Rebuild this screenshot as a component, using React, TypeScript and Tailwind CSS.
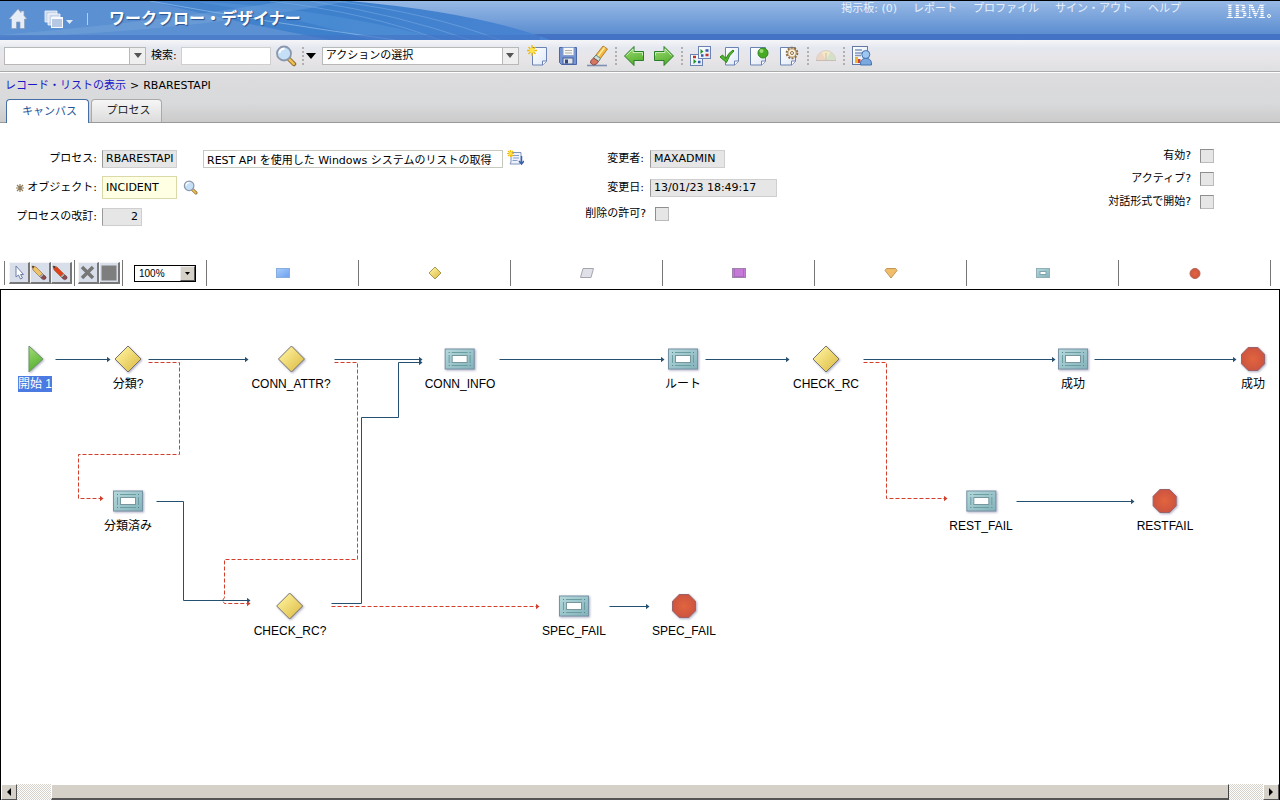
import type { ReactNode } from "react";

const uiFont = "font-['DejaVu_Sans','Noto_Sans_CJK_JP',sans-serif]";
const canvasFont = "font-['Liberation_Sans','Noto_Sans_CJK_JP',sans-serif]";

type NodeKind = "start" | "condition" | "action" | "stop";

// Canvas nodes: x is the centre, y the top of the icon
const nodes: { id: string; kind: NodeKind; x: number; y: number; label: string; selected?: boolean }[] = [
  { id: "start", kind: "start", x: 34, y: 53, label: "開始 1", selected: true },
  { id: "classify", kind: "condition", x: 127, y: 53, label: "分類?" },
  { id: "connAttr", kind: "condition", x: 290, y: 53, label: "CONN_ATTR?" },
  { id: "connInfo", kind: "action", x: 459, y: 53, label: "CONN_INFO" },
  { id: "route", kind: "action", x: 682, y: 53, label: "ルート" },
  { id: "checkRc", kind: "condition", x: 825, y: 53, label: "CHECK_RC" },
  { id: "success", kind: "action", x: 1072, y: 53, label: "成功" },
  { id: "successEnd", kind: "stop", x: 1252, y: 53, label: "成功" },
  { id: "classified", kind: "action", x: 127, y: 195, label: "分類済み" },
  { id: "checkRc2", kind: "condition", x: 289, y: 300, label: "CHECK_RC?" },
  { id: "specFail", kind: "action", x: 573, y: 300, label: "SPEC_FAIL" },
  { id: "specFailEnd", kind: "stop", x: 683, y: 300, label: "SPEC_FAIL" },
  { id: "restFail", kind: "action", x: 980, y: 195, label: "REST_FAIL" },
  { id: "restFailEnd", kind: "stop", x: 1164, y: 195, label: "RESTFAIL" },
];

const positiveEdges = [
  "M54 69H108",
  "M147 69H246",
  "M333 69H420",
  "M155 211H182V310H248",
  "M330 313H360V127H397V72H420",
  "M498 69H662",
  "M704 69H787",
  "M862 69H1053",
  "M1093 69H1234",
  "M608 316H647",
  "M1015 211H1132",
];

const negativeEdges = [
  "M147 72H178V164H77V208H101",
  "M333 72H356V269H223V307L221 310L223 313H248",
  "M862 72H885V208H945",
  "M330 316H537",
];

const topLinks = ["レポート", "プロファイル", "サイン・アウト", "ヘルプ"];

function NodeIcon({ kind }: { kind: NodeKind }) {
  return (
    <svg width="34" height="32" viewBox="0 0 34 32" className="block drop-shadow-[1px_1px_1px_rgba(90,90,140,0.5)]" aria-hidden="true">
      {kind === "start" && <path d="M11 3L25 16L11 29Z" fill="url(#green)" stroke="#6f9468" />}
      {kind === "condition" && <path d="M17 3L30 16L17 29L4 16Z" fill="url(#yellow)" stroke="#77746e" />}
      {kind === "action" && (
        <g>
          <rect x="2.500" y="6" width="29" height="20" fill="url(#teal)" stroke="#7692a4" />
          <path d="M9 9.500h16M9 22.500h16M6.500 12v8M27.500 12v8" stroke="#6c9da1" />
          <path d="M6 9.500h1M27 9.500h1M6 22.500h1M27 22.500h1" stroke="#4b868d" />
          <rect x="9.500" y="12.500" width="15" height="7" fill="#fff" stroke="#76979d" />
        </g>
      )}
      {kind === "stop" && (
        <path d="M12.200 4.500h9.600l6.700 6.700v9.600l-6.700 6.700h-9.600l-6.700-6.700v-9.600Z" fill="url(#red)" stroke="#98646a" />
      )}
    </svg>
  );
}

function Defs() {
  return (
    <svg width="0" height="0" className="absolute" aria-hidden="true">
      <defs>
        <linearGradient id="green" x1="0" y1="0" x2="0.3" y2="1">
          <stop offset="0" stopColor="#a3dc78" />
          <stop offset="1" stopColor="#55b02f" />
        </linearGradient>
        <linearGradient id="yellow" x1="0" y1="0" x2="1" y2="1">
          <stop offset="0.2" stopColor="#fbec93" />
          <stop offset="1" stopColor="#d9b73e" />
        </linearGradient>
        <linearGradient id="teal" x1="0" y1="0" x2="1" y2="1">
          <stop offset="0" stopColor="#b5d9dc" />
          <stop offset="1" stopColor="#83b2ba" />
        </linearGradient>
        <radialGradient id="red">
          <stop offset="0" stopColor="#e2653e" />
          <stop offset="1" stopColor="#cd5440" />
        </radialGradient>
        <linearGradient id="blue" x1="0" y1="0" x2="1" y2="1">
          <stop offset="0" stopColor="#a6cdfa" />
          <stop offset="1" stopColor="#6d9ff0" />
        </linearGradient>
        <linearGradient id="page" x1="0" y1="0" x2="1" y2="1">
          <stop offset="0" stopColor="#ffffff" />
          <stop offset="1" stopColor="#dfe8f7" />
        </linearGradient>
        <marker id="arrowBlue" viewBox="0 0 4 6" markerWidth="4" markerHeight="6" refX="3" refY="3" markerUnits="userSpaceOnUse">
          <path d="M0 0L4 3L0 6Z" fill="#26506f" />
        </marker>
        <marker id="arrowRed" viewBox="0 0 4 6" markerWidth="4" markerHeight="6" refX="3" refY="3" markerUnits="userSpaceOnUse">
          <path d="M0 0L4 3L0 6Z" fill="#d2402c" />
        </marker>
      </defs>
    </svg>
  );
}

function Glass({ size }: { size: number }) {
  return (
    <svg width={size} height={size} viewBox="0 0 22 22" aria-hidden="true">
      <path d="M14 14l5 5" stroke="#8a6b33" strokeWidth="4.500" strokeLinecap="round" />
      <path d="M14.500 14.500l4.300 4.300" stroke="#eebf52" strokeWidth="2.600" strokeLinecap="round" />
      <circle cx="9" cy="8.500" r="7" fill="#c5dff6" stroke="#8b97ad" strokeWidth="1.800" />
      <path d="M4.500 8a4.500 4.500 0 0 1 5-4.200" stroke="#fff" strokeWidth="2" fill="none" />
    </svg>
  );
}

function Icon({ children }: { children: ReactNode }) {
  return (
    <svg width="22" height="22" viewBox="0 0 22 22" fill="none" aria-hidden="true">
      {children}
    </svg>
  );
}

const newIcon = (
  <Icon>
    <path d="M5.500 2.500h14v14l-4 3.500h-10Z" fill="url(#page)" stroke="#6b83b3" />
    <path d="M15.500 20v-4h4" fill="#fff" stroke="#6b83b3" />
    <path d="M5 0v11M0 5.500h10M1.500 2l7 7M8.500 2l-7 7" stroke="#edb90c" strokeWidth="1.300" />
    <circle cx="5" cy="5.500" r="2.400" fill="#ffe54a" />
  </Icon>
);

const saveIcon = (
  <Icon>
    <path d="M2.500 2.500h17v17h-15l-2-2Z" fill="#7695d3" stroke="#4a67a8" />
    <rect x="6" y="2.500" width="11" height="8" fill="#f7f7f5" stroke="#8aa1ce" />
    <path d="M8 5.500h7M8 8h7" stroke="#b1b1a8" />
    <rect x="6" y="13" width="10" height="6" fill="#e2e3e8" stroke="#47629b" />
    <rect x="8" y="14.500" width="3" height="4" fill="#334a80" />
  </Icon>
);

const clearIcon = (
  <Icon>
    <path d="M0 20.500h20" stroke="#8190b2" strokeWidth="1.600" />
    <path d="M16 1l4.500 3-9 12-4.500-3.500Z" fill="#f1b83f" stroke="#b58030" />
    <path d="M17.500 2.500l-9 12" stroke="#ffe9a3" strokeWidth="1.500" />
    <path d="M9 10l4.500 3.500-2 3-5-3.500Z" fill="#c7dedb" stroke="#668681" />
    <path d="M6.500 13l5 3.500-2 2.500-3 1-3-2 .500-2.500Z" fill="#d67762" stroke="#8b4a41" />
  </Icon>
);

const prevIcon = (
  <Icon>
    <path d="M1.500 11L11 1.500v5h9.500v9H11v5Z" fill="url(#green)" stroke="#2a7d2b" />
    <path d="M3.500 10.500L10 4v3.500h9.500v3" stroke="#c4edb4" />
  </Icon>
);

const nextIcon = (
  <Icon>
    <path d="M20.500 11L11 1.500v5H1.500v9H11v5Z" fill="url(#green)" stroke="#2a7d2b" />
    <path d="M2.500 10.500v-3H12V4l6.500 6.500" stroke="#c4edb4" />
  </Icon>
);

const routeIcon = (
  <Icon>
    <rect x="1.500" y="9.500" width="12" height="11" fill="url(#page)" stroke="#6b83b3" />
    <rect x="9.500" y="1.500" width="12" height="12" fill="url(#page)" stroke="#6b83b3" />
    <path d="M11.500 4v5l3-2.500ZM4.500 14v5l3-2.500Z" fill="#1d9320" />
    <path d="M16.500 5.500h3M9 17h2.500" stroke="#3358aa" strokeWidth="2.500" />
    <path d="M4 12h3M16.500 10h3" stroke="#c2312b" strokeWidth="2.500" />
    <path d="M12 10.500h2.500" stroke="#3358aa" strokeWidth="2.500" />
  </Icon>
);

const validateIcon = (
  <Icon>
    <path d="M6.500 2.500h13v14l-4 3.500h-9Z" fill="url(#page)" stroke="#6b83b3" />
    <path d="M15.500 20v-4h4" fill="#fff" stroke="#6b83b3" />
    <path d="M1 12l2.500-2 3.500 3.500Q9 8 14 5l1 1Q10 10 7.500 17.500Z" fill="#52b52f" stroke="#2f861b" />
  </Icon>
);

const activateIcon = (
  <Icon>
    <path d="M1.500 2.500h15v14l-4 3.500h-11Z" fill="url(#page)" stroke="#6b83b3" />
    <path d="M12.500 20v-4h4" fill="#fff" stroke="#6b83b3" />
    <circle cx="14" cy="8" r="5" fill="#46aa24" stroke="#2f861b" />
    <circle cx="12.500" cy="6" r="2" fill="#98dc73" />
  </Icon>
);

const revisionIcon = (
  <Icon>
    <path d="M1.500 2.500h15v14l-4 3.500h-11Z" fill="url(#page)" stroke="#6b83b3" />
    <path d="M12.500 20v-4h4" fill="#fff" stroke="#6b83b3" />
    <circle cx="13" cy="8" r="5.300" stroke="#8e6e43" strokeWidth="2" strokeDasharray="2 1.300" />
    <circle cx="13" cy="8" r="4.200" fill="#fbf0dc" stroke="#a98653" />
    <circle cx="13" cy="8" r="1.500" fill="#fff" stroke="#8e6e43" />
  </Icon>
);

const gaugeIcon = (
  <Icon>
    <path d="M1.500 15.500a9.500 9.500 0 0 1 9.500-9.500v9.500Z" fill="#eed4c3" />
    <path d="M20.500 15.500a9.500 9.500 0 0 0-9.500-9.500v9.500Z" fill="#d3e1c8" />
    <path d="M6.500 7a9.500 9.500 0 0 1 9 0L11 15.500Z" fill="#f2e8c4" />
    <path d="M1 15.500h20M11 8v8" stroke="#c7bcb6" />
    <path d="M1.500 15a9.500 9.500 0 0 1 19 0" stroke="#d8cfc8" />
  </Icon>
);

const reportIcon = (
  <Icon>
    <rect x="1.500" y="1.500" width="15" height="18" fill="url(#page)" stroke="#6378a5" />
    <path d="M4 5h7M4 8h9M4 10.500h6" stroke="#8195bb" strokeWidth="1.400" />
    <rect x="4" y="12" width="3" height="6" fill="#eab432" />
    <rect x="7" y="14" width="2.500" height="4" fill="#cc4138" />
    <path d="M9.500 20q-.500-5 3.500-6.500h4q4 1.500 3.500 6.500Z" fill="#79a9df" stroke="#4473af" />
    <circle cx="14.800" cy="9.500" r="4" fill="#9fc6f0" stroke="#4473af" />
  </Icon>
);

function ToolButton({ label, children }: { label: string; children: ReactNode }) {
  return (
    <button type="button" aria-label={label} className="flex h-6 w-[30px] items-center justify-center">
      {children}
    </button>
  );
}

function Dots() {
  return <span className="h-[20px] w-[6px] shrink-0 bg-[radial-gradient(circle,#b0b0b0_1px,transparent_1px)] bg-[length:6px_4px]" />;
}

function DropArrow() {
  return (
    <span className="pointer-events-none flex w-4 shrink-0 items-center justify-center border-l border-[#b8b8b8] bg-[#efeff0]">
      <svg width="8" height="5" viewBox="0 0 8 5" aria-hidden="true">
        <path d="M0 0h8L4 5Z" fill="#555" />
      </svg>
    </span>
  );
}

function Header() {
  return (
    <header className="relative flex h-10 items-start justify-between border-t border-black bg-[linear-gradient(#97b9e5,#5c8ed1_33px,#4473c5_33px)] text-white">
      <svg className="absolute inset-y-0 left-0 h-full" width="620" height="39" viewBox="0 0 620 39" preserveAspectRatio="none" aria-hidden="true">
        <defs>
          <linearGradient id="swoosh">
            <stop offset="0" stopColor="#5088cc" />
            <stop offset="0.6" stopColor="#3d80cc" />
            <stop offset="1" stopColor="#4a84d2" />
          </linearGradient>
        </defs>
        <path d="M0 0H350Q480 12 550 39H0Z" fill="url(#swoosh)" />
        <path d="M0 0H150Q230 20 330 39H0Z" fill="#5b90d2" />
        <path d="M0 34Q150 22 285 0H350Q180 32 0 36Z" fill="#82aee0" opacity="0.35" />
        <path d="M190 0Q320 6 445 39H370Q290 14 190 0Z" fill="#5f9ddd" opacity="0.35" />
        <path d="M150 0Q260 20 395 39" stroke="#9cc4ee" fill="none" opacity="0.6" />
        <path d="M270 0Q370 12 440 39M310 0Q400 14 470 39M335 0Q430 12 500 39" stroke="#74a9e3" fill="none" opacity="0.6" />
        <path d="M0 34H540V39H0Z" fill="#4473c5" opacity="0.6" />
      </svg>

      <div className="relative flex h-9 items-center pl-2">
        <a href="#home" aria-label="ホーム">
          <svg width="20" height="22" viewBox="0 0 20 22" aria-hidden="true">
            <path d="M10 1L1 11h2.500v9.500h5V14h3.500v6.500h4.500V11H19l-3-3.500V3h-3v1.500Z" fill="#e7edf6" stroke="#8c9fba" strokeWidth="0.700" />
          </svg>
        </a>
        <button type="button" aria-label="ジャンプ先" className="ml-4 flex items-end gap-0.5">
          <svg width="20" height="20" viewBox="0 0 20 20" aria-hidden="true">
            <path d="M1 2h12v3H5v8H1ZM4 5h12v3H8v8H4Z" fill="#c6d5ea" stroke="#f6f9fd" strokeWidth="0.800" />
            <rect x="7.500" y="8.500" width="11" height="10" fill="#b7c9e2" stroke="#f6f9fd" />
            <path d="M7.500 9.500h11" stroke="#f6f9fd" />
          </svg>
          <svg width="8" height="11" viewBox="0 0 8 11" aria-hidden="true">
            <path d="M0 2h7L3.500 6Z" fill="#dfe8f5" />
          </svg>
        </button>
        <span className="ml-[13px] h-3 w-px bg-[#b7cdec]" />
        <h1 className="ml-[21px] text-base leading-5 font-bold [text-shadow:1px_1px_1px_#2c4f8a]">ワークフロー・デザイナー</h1>
      </div>

      <div className="relative flex items-start pr-2">
        <nav className="flex gap-4 text-[11px] leading-4 text-[#e8f0fb]">
          <a href="#bulletins">掲示板: (0)</a>
          {topLinks.map((link) => (
            <a key={link} href={`#${link}`}>{link}</a>
          ))}
        </nav>
        <span className="ml-[45px] bg-[repeating-linear-gradient(#fff_0_1px,rgba(255,255,255,0.3)_1px_2px)] bg-clip-text font-['Liberation_Serif',serif] text-[20px] leading-5 font-bold text-transparent">IBM</span>
        <svg width="6" height="20" viewBox="0 0 6 20" aria-hidden="true">
          <circle cx="3" cy="15" r="1.500" fill="none" stroke="#fff" />
        </svg>
      </div>
    </header>
  );
}

function Toolbar() {
  return (
    <div className="flex h-8 items-center border-b border-[#a9aaa9] bg-[linear-gradient(#f6f6f8,#e5e8f0_25%,#e8e5e7_60%,#dee0e1)] pl-1">
      <div className="flex h-[18px] w-[142px] border border-[#b8b8b8] bg-white">
        <select aria-label="検索条件" className="min-w-0 flex-1 appearance-none px-0.5 outline-none">
          <option></option>
        </select>
        <DropArrow />
      </div>
      <label htmlFor="find" className="ml-[5px]">検索:</label>
      <input id="find" type="text" className="ml-1 h-[18px] w-[90px] border border-[#cfcfcf] bg-white px-1 outline-none" />
      <button type="button" aria-label="検索" className="ml-1 flex">
        <Glass size={22} />
      </button>
      <span className="ml-[3px] flex"><Dots /></span>
      <button type="button" aria-label="検索オプション" className="mr-[6px]">
        <svg width="10" height="6" viewBox="0 0 10 6" aria-hidden="true"><path d="M0 0h10L5 6Z" /></svg>
      </button>
      <div className="flex h-[18px] w-[197px] border border-[#b8b8b8] bg-white">
        <select aria-label="アクション" className="min-w-0 flex-1 appearance-none px-[3px] leading-4 outline-none">
          <option>アクションの選択</option>
        </select>
        <DropArrow />
      </div>
      <div className="ml-1 flex items-center">
        <ToolButton label="新規">{newIcon}</ToolButton>
        <ToolButton label="保存">{saveIcon}</ToolButton>
        <ToolButton label="クリア">{clearIcon}</ToolButton>
        <Dots />
        <ToolButton label="前へ">{prevIcon}</ToolButton>
        <ToolButton label="次へ">{nextIcon}</ToolButton>
        <Dots />
        <ToolButton label="ルート">{routeIcon}</ToolButton>
        <ToolButton label="検証">{validateIcon}</ToolButton>
        <ToolButton label="有効化">{activateIcon}</ToolButton>
        <ToolButton label="改訂">{revisionIcon}</ToolButton>
        <Dots />
        <ToolButton label="メトリック">{gaugeIcon}</ToolButton>
        <Dots />
        <ToolButton label="レポートの実行">{reportIcon}</ToolButton>
      </div>
    </div>
  );
}

function Tabs() {
  return (
    <div className="h-[51px] border-t border-b border-t-white border-b-[#999] bg-[linear-gradient(#dddbde,#d8dadb_60%,#cccbcc)]">
      <div className="flex h-[26px] items-center gap-1 pl-[5px]">
        <a href="#list" className="text-[#1717c8]">レコード・リストの表示</a>
        <span>&gt;</span>
        <span>RBARESTAPI</span>
      </div>
      <div role="tablist" className="flex gap-0.5 pl-[6px]">
        <button role="tab" type="button" aria-selected="true" className="h-6 w-[83px] rounded-t border border-b-0 border-[#466da6] bg-white pl-1 text-[#23539b]">キャンバス</button>
        <button role="tab" type="button" aria-selected="false" className="h-[23px] w-[71px] rounded-t border border-b-0 border-[#aaa] bg-[linear-gradient(#f6f6f6,#dcdcdc)] pl-1 text-[#222]">プロセス</button>
      </div>
    </div>
  );
}

const readOnly = "h-[18px] border border-[#cfcfcf] border-l-[#999] bg-[#e6e6e6] pl-[3px] leading-4 outline-none";
const checkbox = "h-[14px] w-[14px] appearance-none border border-[#bbb] border-t-[#8e8e8e] border-l-[#8e8e8e] bg-[#e6e6e6]";

function ProcessForm() {
  return (
    <form className="grid h-[137px] grid-cols-[45%_40%_15%] pt-[21px]">
      <div>
        <div className="flex h-[29px] items-center">
          <label htmlFor="process" className="w-[97px] text-right">プロセス:</label>
          <input id="process" readOnly defaultValue="RBARESTAPI" className={`${readOnly} ml-[5px] w-[75px]`} />
          <input aria-label="説明" defaultValue="REST API を使用した Windows システムのリストの取得" className="ml-[26px] h-[18px] w-[300px] border border-[#c5c9c0] px-[3px] leading-4 outline-none" />
          <button type="button" aria-label="詳細説明" className="ml-1">
            <svg width="17" height="17" viewBox="0 0 17 17" fill="none" aria-hidden="true">
              <path d="M4 2.500h10v9l-1 2.500H3l1-2Z" fill="#eef3fb" stroke="#8196bd" />
              <path d="M6 5.500h6M6 8h6M5.500 10.500h5" stroke="#88a0cc" />
              <path d="M14.500 6v7M12 11l2.500 3 2.500-3" stroke="#3c5fae" strokeWidth="1.500" />
              <path d="M3.500 0v7M0 3.500h7M1 1l5 5M6 1l-5 5" stroke="#f0bd13" strokeWidth="1.200" />
              <circle cx="3.500" cy="3.500" r="1.500" fill="#ffe54a" />
            </svg>
          </button>
        </div>
        <div className="flex h-[29px] items-center">
          <label htmlFor="object" className="flex w-[97px] items-center justify-end gap-[3px]">
            <svg width="8" height="8" viewBox="0 0 8 8" aria-hidden="true">
              <path d="M4 0v8M0 4h8M1 1l6 6M7 1l-6 6" stroke="#8f7c5c" strokeWidth="1.200" />
            </svg>
            オブジェクト:
          </label>
          <input id="object" defaultValue="INCIDENT" className="ml-[5px] h-[23px] w-[75px] border border-[#dcd9a8] bg-[#ffffe4] pl-[3px] outline-none" />
          <button type="button" aria-label="値の選択" className="ml-1.5 flex"><Glass size={15} /></button>
        </div>
        <div className="flex h-[29px] items-center">
          <label htmlFor="revision" className="w-[97px] text-right">プロセスの改訂:</label>
          <input id="revision" readOnly defaultValue="2" className={`${readOnly} ml-[5px] w-10 pr-[3px] text-right`} />
        </div>
      </div>

      <div>
        <div className="flex h-[29px] items-center">
          <label htmlFor="changedBy" className="w-[68px] text-right">変更者:</label>
          <input id="changedBy" readOnly defaultValue="MAXADMIN" className={`${readOnly} ml-1.5 w-[75px]`} />
        </div>
        <div className="flex h-[29px] items-center">
          <label htmlFor="changedDate" className="w-[68px] text-right">変更日:</label>
          <input id="changedDate" readOnly defaultValue="13/01/23 18:49:17" className={`${readOnly} ml-1.5 w-[127px]`} />
        </div>
        <div className="flex h-[23px] items-center">
          <label htmlFor="allowDelete" className="w-[70px] text-right">削除の許可?</label>
          <input id="allowDelete" type="checkbox" className={`${checkbox} ml-[9px]`} />
        </div>
      </div>

      <div className="pr-[66px] whitespace-nowrap">
        {[["enabled", "有効?"], ["active", "アクティブ?"], ["interactive", "対話形式で開始?"]].map(([id, text]) => (
          <div key={id} className="flex h-[23px] items-center justify-end gap-[9px]">
            <label htmlFor={id}>{text}</label>
            <input id={id} type="checkbox" className={checkbox} />
          </div>
        ))}
      </div>
    </form>
  );
}

function ModeButton({ label, children }: { label: string; children: ReactNode }) {
  return (
    <button type="button" aria-label={label} className="flex h-[22px] w-[21px] items-center justify-center border border-[#f5f5f5] border-r-2 border-b-2 border-r-[#777] border-b-[#777] bg-[#d8dfea]">
      <svg width="18" height="18" viewBox="0 0 18 18" className="shrink-0" aria-hidden="true">{children}</svg>
    </button>
  );
}

function Pencil({ color }: { color: string }) {
  return (
    <g>
      <path d="M1 2l4 1 8 8-3 3-8-8Z" fill={color} stroke="#9c7245" strokeWidth="0.700" />
      <path d="M1 2l2.500.600L2 4.500Z" fill="#333" />
      <path d="M11.500 9.500l-3 3 1.500 1.500 3-3Z" fill="#aaa" stroke="#777" strokeWidth="0.500" />
      <path d="M13 11l-3 3q2.500 3 4.500 1t-1.500-4Z" fill="#8d4850" stroke="#62343c" strokeWidth="0.500" />
    </g>
  );
}

const palette: { label: string; shape: ReactNode }[] = [
  { label: "タスク", shape: <rect x="1.500" y="2.500" width="13" height="9" fill="url(#blue)" stroke="#88aede" /> },
  { label: "条件", shape: <path d="M8 1l6 6-6 6-6-6Z" fill="url(#yellow)" stroke="#a99754" /> },
  { label: "サブプロセス", shape: <path d="M4 2.500h10.500l-2.500 9H1.500Z" fill="#dfe0e8" stroke="#a5a5af" /> },
  {
    label: "手動入力",
    shape: (
      <g>
        <rect x="1.500" y="2.500" width="13" height="9" fill="#c47ad6" stroke="#9d84a8" />
        <path d="M3.500 3v8M12.500 3v8M4 10.500h8" stroke="#ad68c5" />
      </g>
    ),
  },
  { label: "待機", shape: <path d="M3.500 2.500h9l1.500 2-6 7.500-6-7.500Z" fill="#f1bd68" stroke="#c1965b" /> },
  {
    label: "対話",
    shape: (
      <g>
        <rect x="1.500" y="2.500" width="13" height="9" fill="url(#teal)" stroke="#91b0b8" />
        <rect x="5" y="5.500" width="6" height="3" fill="#fff" stroke="#7fa4ae" />
      </g>
    ),
  },
  { label: "停止", shape: <circle cx="8" cy="7.500" r="5" fill="url(#red)" stroke="#b56353" /> },
];

function Palette() {
  return (
    <div className="flex h-[29px] pb-[3px]">
      <div className="flex w-[206px] shrink-0 items-center pl-1">
        <span className="h-6 w-px bg-[#777]" />
        <div className="ml-1 flex">
          <ModeButton label="選択">
            <path d="M6 2v11l2.500-2 2 4 2-1-2-3.500h3Z" fill="#fff" stroke="#6b7fa6" />
          </ModeButton>
          <ModeButton label="肯定ライン"><Pencil color="#eec268" /></ModeButton>
          <ModeButton label="否定ライン"><Pencil color="#e2401d" /></ModeButton>
        </div>
        <span className="mx-[2px] h-[26px] w-px bg-[#777]" />
        <div className="ml-px flex">
          <ModeButton label="削除"><path d="M3 3l11 11M14 3L3 14" stroke="#777" strokeWidth="3.500" /></ModeButton>
          <ModeButton label="プロパティー"><rect x="1.500" y="1.500" width="15" height="15" fill="#7e7e7e" /></ModeButton>
        </div>
        <span className="ml-0.5 h-[26px] w-px bg-[#777]" />
        <div className="ml-[11px] flex h-[17px] w-[62px] border border-black bg-white">
          <select aria-label="ズーム" className="min-w-0 flex-1 appearance-none pl-1 font-['Liberation_Sans',sans-serif] text-[10px] leading-[15px] outline-none">
            <option>100%</option>
          </select>
          <span className="pointer-events-none flex w-[15px] items-center justify-center border border-[#eee] border-r-[#555] border-b-[#555] bg-[#d5d1c9]">
            <svg width="5" height="3" viewBox="0 0 5 3" aria-hidden="true"><path d="M0 0h5L2.500 3Z" /></svg>
          </span>
        </div>
      </div>
      <div className="mr-[9px] flex flex-1 border-r border-[#777]">
        {palette.map(({ label, shape }) => (
          <button key={label} type="button" aria-label={label} className="flex flex-1 items-center justify-center border-l border-[#777]">
            <svg width="16" height="14" viewBox="0 0 16 14" aria-hidden="true">{shape}</svg>
          </button>
        ))}
      </div>
    </div>
  );
}

function ScrollButton({ label, path }: { label: string; path: string }) {
  return (
    <button type="button" aria-label={label} className="flex w-4 shrink-0 items-center justify-center border border-white border-r-[#555] border-b-[#555] bg-[#d5d1c9]">
      <svg width="4" height="8" viewBox="0 0 4 8" aria-hidden="true"><path d={path} /></svg>
    </button>
  );
}

function Canvas() {
  return (
    <main className={`flex min-h-[400px] flex-1 flex-col border-x border-t border-black bg-white text-xs leading-4 ${canvasFont}`}>
      <div className="relative flex-1 overflow-hidden">
        <svg className="absolute inset-0 h-full w-full" fill="none" aria-hidden="true">
          <g transform="translate(0.5 0.5)">
            {positiveEdges.map((d) => (
              <path key={d} d={d} stroke="#26506f" markerEnd="url(#arrowBlue)" />
            ))}
            {negativeEdges.map((d) => (
              <path key={d} d={d} stroke="#d2402c" strokeDasharray="4 2" markerEnd="url(#arrowRed)" />
            ))}
          </g>
        </svg>
        {nodes.map(({ id, kind, x, y, label, selected }) => (
          <div key={id} className="absolute flex -translate-x-1/2 flex-col items-center gap-px whitespace-nowrap" style={{ left: x, top: y }}>
            <NodeIcon kind={kind} />
            <span className={selected ? "bg-[#4a7ae2] text-white" : "text-black"}>{label}</span>
          </div>
        ))}
      </div>
      <div className="flex h-4 bg-[repeating-conic-gradient(#d5d1c9_0_25%,#fff_0_50%)] bg-[length:2px_2px]">
        <ScrollButton label="左へスクロール" path="M4 0v8L0 4Z" />
        <span className="mx-[34px] flex-1 border border-white border-r-[#444] border-b-2 border-b-[#555] bg-[#d5d1c9]" />
        <ScrollButton label="右へスクロール" path="M0 0v8L4 4Z" />
      </div>
    </main>
  );
}

export default function App() {
  return (
    <div className={`flex min-h-screen flex-col bg-white text-[11px] leading-[14px] text-black ${uiFont}`}>
      <Defs />
      <Header />
      <Toolbar />
      <Tabs />
      <ProcessForm />
      <Palette />
      <Canvas />
    </div>
  );
}
